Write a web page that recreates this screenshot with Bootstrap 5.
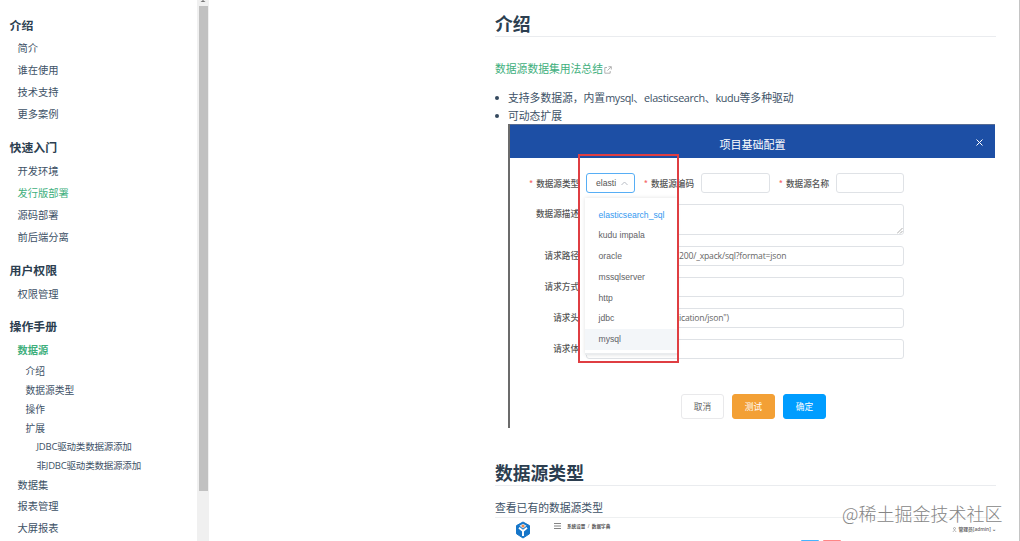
<!DOCTYPE html>
<html lang="zh-CN">
<head>
<meta charset="utf-8">
<meta name="viewport" content="width=device-width, initial-scale=1">
<title>数据源</title>
<link href="https://cdn.jsdelivr.net/npm/bootstrap@5.3.0/dist/css/bootstrap.min.css" rel="stylesheet">
<style>
body{font-family:"Open Sans","Noto Sans CJK SC",sans-serif;font-size:10.8px;line-height:18px;color:#3d5166;background:#fff}
.page{height:541px}
.side{width:197px;padding:12.5px 0 0 9.5px}
.side h6{font-size:11.9px;line-height:24.5px;height:24.5px;margin:0;font-weight:700;color:#2c3e50}
.side ul{margin:0 0 10px}
.side li{font-size:10.25px;line-height:22px;padding-left:8px;white-space:nowrap}
.side h6 ~ h6 ~ ul{padding-top:.5px;margin-bottom:9.6px}
.side li.l2{font-size:9.75px;line-height:19px;padding-left:16px}
.side li.first{margin-top:1.3px}
.side li.l3{font-size:9.5px;line-height:18.4px;padding-left:27px;letter-spacing:-.2px}
.side li.after{margin-top:-.6px}
.side li.after,.side li.after ~ li{line-height:21.7px}
.green{color:#3eaf7c}
.track{width:12px;background:#f0f0f0}
.thumb{width:9px;height:485px;background:#c1c1c1;margin:0 auto}
.tip{height:6px}
.main{margin-left:286px;width:501px}
.main h2{font-size:17.8px;font-weight:700;color:#2c3e50;line-height:24px;margin:0;border-bottom:1px solid #eaecef}
.main ul{padding-left:12px;margin:0}
.main .lt{letter-spacing:-.35px}
.dot{width:4px;height:4px;border-radius:50%;background:#34495e;margin:7px 9px 0 -12px}
.shot{margin-left:13px;width:487px;height:304px;border-left:2px solid #6b6b6b;color:#555}
.bar{height:34px;background:#1d4fa5;border-top:1px solid #566c94;color:#fff;font-size:11px}
.bar svg{right:12px;top:14px}
.frm{padding:15px 0 0 19px;font-size:8.6px}
.lab{width:50px;text-align:right;font-weight:500;color:#555;white-space:nowrap;font-family:"Noto Sans CJK SC",sans-serif}
.lab i{color:#f56c6c;font-style:normal;margin-right:3px}
.fld{border:1px solid #dfe2e6;border-radius:3px;height:20px;background:#fff;line-height:18px}
.wide{width:318px;margin-left:7px;padding-left:92px;color:#666;letter-spacing:-.19px}
.pick{border-color:#57aef5;width:49px;margin-left:7px;padding:0 6px 0 9px;font-family:"Liberation Sans",sans-serif}
.drop{left:75px;top:74px;width:92px;height:157px;background:#fff;box-shadow:0 0 4px rgba(0,0,0,.12);padding-top:6.5px;border-bottom:2px solid #eaecee;font:8.6px/20.75px "Liberation Sans",sans-serif;color:#5f6266}
.drop div{padding-left:13.5px;height:20.75px}
.drop .hot{background:#f3f6f9}
.red{left:68px;top:30px;width:101px;height:209px;border:2px solid #df3e42}
.bt{width:43px;height:25px;border-radius:3px;font-size:8.7px;line-height:23px;text-align:center;border:1px solid #e9e9eb;color:#666;font-family:"Noto Sans CJK SC",sans-serif}
.bt.or{background:#f3a035;border-color:#f3a035;color:#fff}
.bt.bl{background:#009dff;border-color:#009dff;color:#fff}
.shot2{border-top:1px solid #eef0f1;height:24px;font-size:5px;line-height:6px;color:#555;font-weight:600}
.chip{width:18px;height:2px;border-radius:1px 1px 0 0}
.wm{left:842px;top:499px;font:300 18px/28px "Noto Sans CJK SC",sans-serif;color:#858585;white-space:nowrap}
.edge{left:1019px;top:0;width:1px;height:541px;background:#c4c4c4}
</style>
<script src="https://cdn.jsdelivr.net/npm/bootstrap@5.3.0/dist/js/bootstrap.bundle.min.js"></script>
</head>
<body class="overflow-hidden">
<div class="page d-flex position-relative overflow-hidden">
<nav class="side flex-shrink-0">
<h6>介绍</h6>
<ul class="list-unstyled"><li>简介</li><li>谁在使用</li><li>技术支持</li><li>更多案例</li></ul>
<h6>快速入门</h6>
<ul class="list-unstyled"><li>开发环境</li><li class="green">发行版部署</li><li>源码部署</li><li>前后端分离</li></ul>
<h6>用户权限</h6>
<ul class="list-unstyled"><li>权限管理</li></ul>
<h6>操作手册</h6>
<ul class="list-unstyled"><li class="green fw-semibold">数据源</li><li class="l2 first">介绍</li><li class="l2">数据源类型</li><li class="l2">操作</li><li class="l2">扩展</li><li class="l3">JDBC驱动类数据源添加</li><li class="l3">非JDBC驱动类数据源添加</li><li class="after">数据集</li><li>报表管理</li><li>大屏报表</li></ul>
</nav>
<div class="track flex-shrink-0"><div class="tip d-flex justify-content-center"><svg width="6" height="3"><path d="M3 0L5.500 2H.5z" fill="#777"/></svg></div><div class="thumb"></div></div>
<main class="main flex-shrink-0">
<h2 style="padding-top:12px">介绍</h2>
<p class="green mb-0" style="margin-top:23px">数据源数据集用法总结<svg style="margin-left:1px" width="8" height="8" viewBox="0 0 8 8" fill="none" stroke="#aaa" stroke-width=".9"><path d="M3 1.500H.8v5.700h5.400V5M4.500.7h2.800v2.800M7.200.8L3.400 4.600"/></svg></p>
<ul class="list-unstyled" style="margin-top:10.500px"><li class="d-flex"><span class="dot"></span><span>支持多数据源，内置<span class="lt">mysql</span>、<span class="lt">elasticsearch</span>、<span class="lt">kudu</span>等多种驱动</span></li><li class="d-flex"><span class="dot"></span>可动态扩展</li></ul>
<section class="shot position-relative" style="margin-top:-.5px">
<div class="bar d-flex align-items-center justify-content-center position-relative" style="padding-top:6px"><span>项目基础配置</span><svg class="position-absolute" width="7" height="7" stroke="#fff" stroke-width="1"><path d="M.5.5l6 6M6.500.5l-6 6"/></svg></div>
<div class="frm">
<div class="d-flex align-items-center"><span class="lab"><i>*</i>数据源类型</span><div class="fld pick d-flex align-items-center justify-content-between"><span>elasti</span><svg width="7" height="5" fill="none" stroke="#b8bcc4"><path d="M.5 4L3.500 1l3 3"/></svg></div>
<span class="lab" style="width:59px"><i>*</i>数据源编码</span><div class="fld" style="width:69px;margin-left:7px"></div><span class="lab" style="width:59px"><i>*</i>数据源名称</span><div class="fld" style="width:68px;margin-left:7px"></div></div>
<div class="d-flex" style="margin-top:11px"><span class="lab">数据源描述</span><div class="fld wide d-flex align-items-end justify-content-end" style="height:31px"><svg width="6" height="6" stroke="#999" stroke-width=".8"><path d="M0 5.500L5.500 0M3 5.500L5.500 3"/></svg></div></div>
<div class="d-flex" style="margin-top:10.500px"><span class="lab">请求路径</span><div class="fld wide">200/_xpack/sql?format=json</div></div>
<div class="d-flex" style="margin-top:11px"><span class="lab">请求方式</span><div class="fld wide"></div></div>
<div class="d-flex" style="margin-top:11px"><span class="lab">请求头</span><div class="fld wide">ication/json")</div></div>
<div class="d-flex" style="margin-top:11px"><span class="lab">请求体</span><div class="fld wide"></div></div>
<div class="d-flex" style="margin:35.500px 0 0 152px;gap:8px"><div class="bt">取消</div><div class="bt or">测试</div><div class="bt bl">确定</div></div>
</div>
<div class="drop position-absolute"><div style="color:#3399f0">elasticsearch_sql</div><div>kudu impala</div><div>oracle</div><div>mssqlserver</div><div>http</div><div>jdbc</div><div class="hot">mysql</div></div>
<div class="red position-absolute"></div>
</section>
<h2 style="padding-top:33px">数据源类型</h2>
<p class="mb-0" style="margin-top:12.500px">查看已有的数据源类型</p>
<section class="shot2 d-flex position-relative">
<svg style="margin:3px 0 0 20px" width="16" height="18" viewBox="0 0 16 18"><path d="M8 1l6.500 3.600v8.200L8 17l-6.500-4.200V4.600z" fill="#1676c9" stroke="#1676c9" stroke-linejoin="round"/><path d="M4 6.800l4 3.200 4-3.200M8 10v5" fill="none" stroke="#fff" stroke-width="1.900"/><path d="M8 2.800l3.500 2L8 7.500 4.500 4.800z" fill="#d8eefc"/><circle cx="8" cy="5" r="1.500" fill="#f08a4b"/></svg>
<svg style="margin:5px 6px 0 23px" width="7" height="6" stroke="#777" stroke-width=".9"><path d="M0 .5h7M0 3h7M0 5.500h7"/></svg>
<span style="margin-top:5px;font-size:4.600px;white-space:pre">系统设置<span class="fw-normal">  /  </span>数据字典</span>
<span class="ms-auto" style="margin-top:8px;color:#666;white-space:nowrap;font-size:4.800px"><svg width="5" height="5" fill="none" stroke="#888" stroke-width=".6"><circle cx="2.500" cy="1.500" r="1"/><path d="M.5 5q2-3 4 0"/></svg> 管理员[admin] ⌄</span>
<div class="position-absolute d-flex" style="left:306px;top:22px;gap:4px"><span class="chip" style="background:#45b4ff"></span><span class="chip" style="background:#ff8585"></span></div>
</section>
</main>
<div class="wm position-absolute">@稀土掘金技术社区</div>
<div class="edge position-absolute"></div>
</div>
</body>
</html>
